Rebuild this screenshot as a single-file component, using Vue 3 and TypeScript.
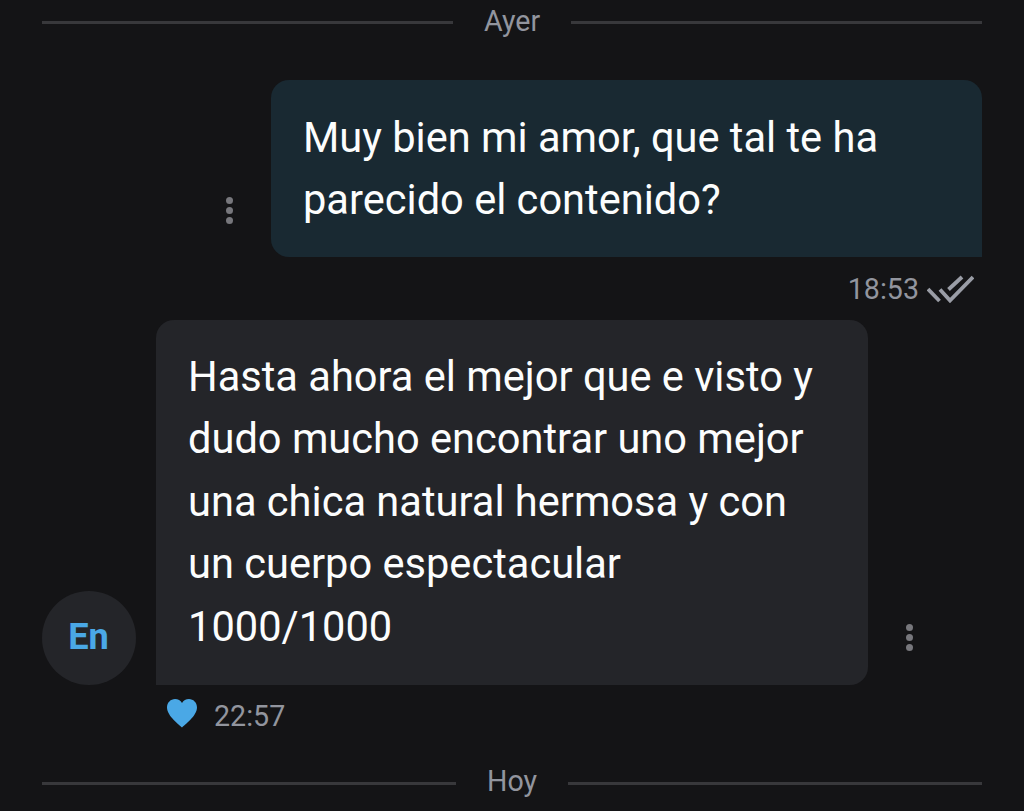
<script setup lang="ts">
const sentLines: string[] = ['Muy bien mi amor, que tal te ha', 'parecido el contenido?']
const receivedLines: string[] = [
  'Hasta ahora el mejor que e visto y',
  'dudo mucho encontrar uno mejor',
  'una chica natural hermosa y con',
  'un cuerpo espectacular',
  '1000/1000',
]
</script>

<template>
  <main class="chat">
    <div class="divider first"><span class="rule"></span><span class="day ayer">Ayer</span><span class="rule"></span></div>

    <section class="row sent">
      <div class="dots dots-sent"><i></i><i></i><i></i></div>
      <div class="bubble bubble-sent">
        <div v-for="l in sentLines" :key="l" class="line">{{ l }}</div>
      </div>
    </section>
    <div class="meta meta-sent">
      <span class="time">18:53</span>
      <svg class="checks" width="47" height="28" viewBox="0 0 47 28" fill="none" stroke="#9a9da6" stroke-width="3.8">
        <path d="M1 14 L12.5 26" />
        <path d="M13 14.5 L23 25.5 L46 2" />
        <path d="M21.5 14.5 L35 2" />
      </svg>
    </div>

    <section class="row received">
      <div class="avatar">En</div>
      <div class="bubble bubble-received">
        <div v-for="l in receivedLines" :key="l" class="line">{{ l }}</div>
      </div>
      <div class="dots dots-received"><i></i><i></i><i></i></div>
    </section>
    <div class="meta meta-received">
      <svg class="heart" width="32" height="30" viewBox="0 0 32 30">
        <path fill="#4aa8e6" d="M16 29.5 C13.5 27 1 18 1 9.5 C1 4.5 4.8 1 9 1 C12 1 14.6 2.6 16 5 C17.4 2.6 20 1 23 1 C27.2 1 31 4.5 31 9.5 C31 18 18.5 27 16 29.5 Z" />
      </svg>
      <span class="time time-received">22:57</span>
    </div>

    <div class="divider last"><span class="rule"></span><span class="day hoy">Hoy</span><span class="rule"></span></div>
  </main>
</template>

<style>
html, body { margin: 0; background: #141416; }
</style>

<style scoped>
.chat {
  width: 1024px;
  height: 811px;
  box-sizing: border-box;
  padding: 0 42px;
  background: #141416;
  font-family: Roboto, "Liberation Sans", sans-serif;
  overflow: hidden;
}
.divider { display: flex; align-items: center; height: 44px; }
.divider.first { margin-bottom: 36px; }
.divider.last { margin-top: 13px; }
.rule { flex: 1; height: 3px; background: #38383b; }
.day { font-size: 28.6px; color: #92959e; text-align: center; line-height: 42px; }
.ayer { padding: 0 31px 2px; }
.hoy { padding: 0 31px 4px; }
.row { display: flex; }
.sent { justify-content: flex-end; align-items: flex-end; }
.received { align-items: flex-end; }
.bubble { color: #fcfdfd; font-size: 41.6px; line-height: 62.4px; white-space: nowrap; box-sizing: border-box; padding: 26px 32px 0; }
.bubble-sent { width: 711px; height: 177px; padding-top: 27px; background: #192932; border-radius: 18px 18px 0 18px; }
.bubble-received { width: 712px; height: 365px; background: #242529; border-radius: 18px 18px 18px 0; margin-left: 20px; }
.line { height: 62.4px; }
.dots { display: flex; flex-direction: column; gap: 3px; }
.dots i { display: block; width: 7px; height: 7px; border-radius: 50%; background: #77777c; }
.dots-sent { margin-right: 38px; margin-bottom: 33px; }
.dots-received { margin-left: 38px; margin-bottom: 34px; }
.avatar {
  width: 94px; height: 94px; border-radius: 50%;
  box-sizing: border-box;
  padding: 0 1px 3px 0;
  background: #242529; color: #4aa8e6;
  font-size: 36.2px; font-weight: 700;
  display: flex; align-items: center; justify-content: center;
}
.time { font-size: 28.6px; color: #92959e; line-height: 32px; }
.time-received { position: relative; top: -1px; }
.meta { display: flex; align-items: center; }
.meta-sent { justify-content: flex-end; height: 63px; padding-right: 8px; gap: 8px; }
.meta-received { height: 63px; padding-left: 124px; gap: 16px; }
.checks { flex: none; }
.heart { flex: none; position: relative; top: -4px; }
</style>
